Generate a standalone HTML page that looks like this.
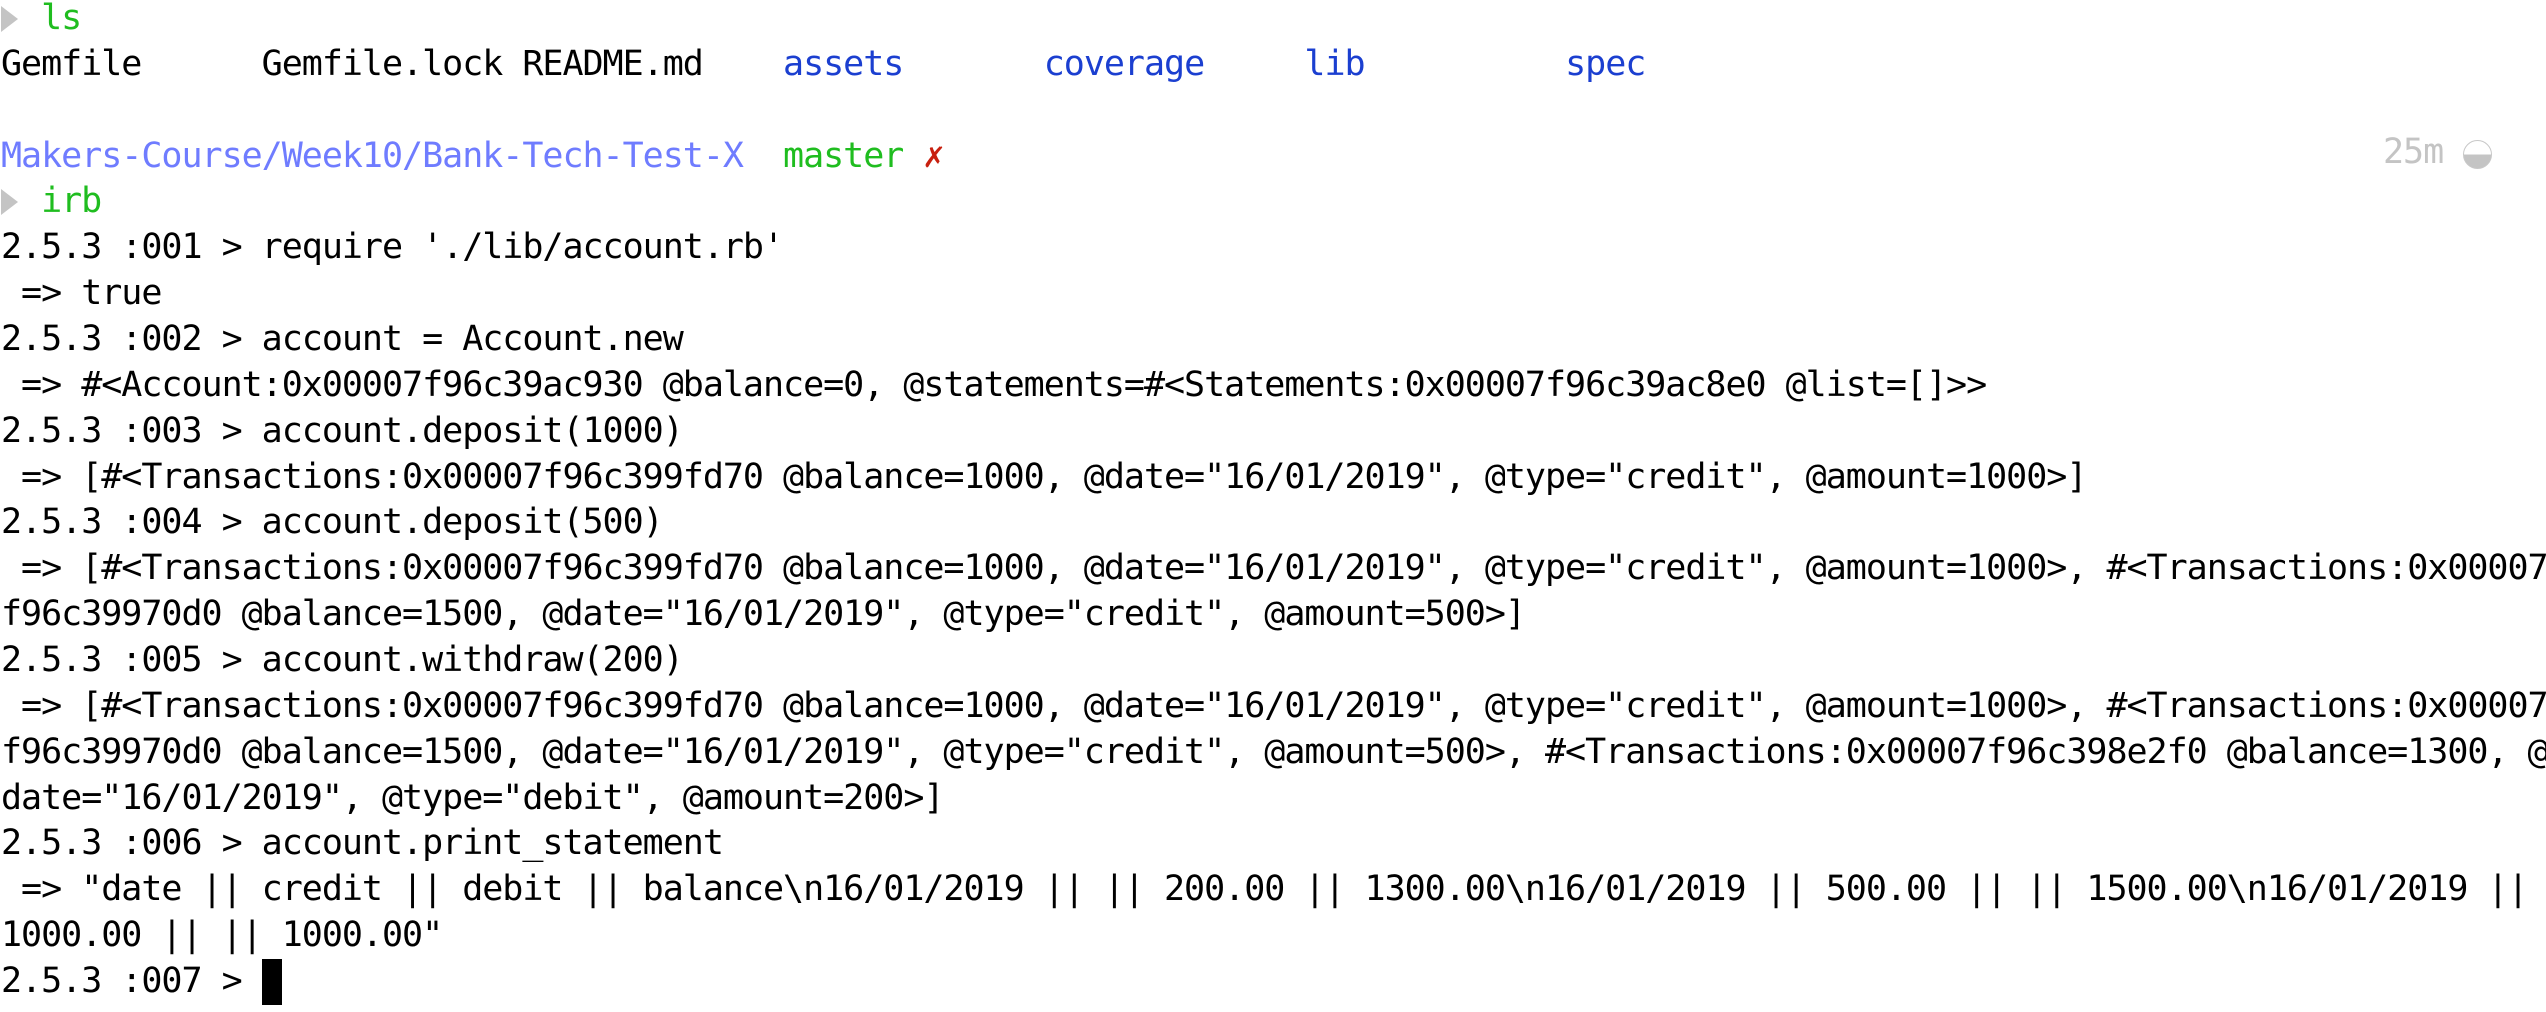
<!DOCTYPE html>
<html><head><meta charset="utf-8"><style>
html,body{margin:0;padding:0;background:#fff;width:2546px;height:1012px;overflow:hidden}
pre{margin:0;position:absolute;left:1px;top:-4px;font-family:"DejaVu Sans Mono","Liberation Mono",monospace;font-size:35px;letter-spacing:-1.02px;line-height:45.86px;color:#000;white-space:pre}
.g{color:#1fbd1f}.p{color:#6f7cff}.b{color:#1b3fd0}.r{color:#c8200f}.t{color:#c4c4c4}
.tri{display:inline-block;width:0;height:0;border-top:13px solid transparent;border-bottom:13px solid transparent;border-left:17px solid #c4c4c4;margin-right:3px;vertical-align:-3px}
.cur{display:inline-block;width:20px;height:46px;background:#000;vertical-align:top}
#rt{position:absolute;left:2383px;top:129px;font-family:"DejaVu Sans Mono",monospace;font-size:35px;letter-spacing:-1.02px;color:#c4c4c4;line-height:46px}
#circ{position:absolute;left:2463px;top:140px;width:27px;height:27px;border:1.5px solid #c8c8c8;border-radius:50%;overflow:hidden;background:linear-gradient(#fff 50%,#c4c4c4 50%)}
</style></head><body>
<pre><span class="tri"></span> <span class="g">ls</span>
Gemfile      Gemfile.lock README.md    <span class="b">assets</span>       <span class="b">coverage</span>     <span class="b">lib</span>          <span class="b">spec</span>

<span class="p">Makers-Course/Week10/Bank-Tech-Test-X</span>  <span class="g">master</span> <span class="r">✗</span>
<span class="tri"></span> <span class="g">irb</span>
2.5.3 :001 &gt; require './lib/account.rb'
 =&gt; true
2.5.3 :002 &gt; account = Account.new
 =&gt; #&lt;Account:0x00007f96c39ac930 @balance=0, @statements=#&lt;Statements:0x00007f96c39ac8e0 @list=[]&gt;&gt;
2.5.3 :003 &gt; account.deposit(1000)
 =&gt; [#&lt;Transactions:0x00007f96c399fd70 @balance=1000, @date="16/01/2019", @type="credit", @amount=1000&gt;]
2.5.3 :004 &gt; account.deposit(500)
 =&gt; [#&lt;Transactions:0x00007f96c399fd70 @balance=1000, @date="16/01/2019", @type="credit", @amount=1000&gt;, #&lt;Transactions:0x00007
f96c39970d0 @balance=1500, @date="16/01/2019", @type="credit", @amount=500&gt;]
2.5.3 :005 &gt; account.withdraw(200)
 =&gt; [#&lt;Transactions:0x00007f96c399fd70 @balance=1000, @date="16/01/2019", @type="credit", @amount=1000&gt;, #&lt;Transactions:0x00007
f96c39970d0 @balance=1500, @date="16/01/2019", @type="credit", @amount=500&gt;, #&lt;Transactions:0x00007f96c398e2f0 @balance=1300, @
date="16/01/2019", @type="debit", @amount=200&gt;]
2.5.3 :006 &gt; account.print_statement
 =&gt; "date || credit || debit || balance\n16/01/2019 || || 200.00 || 1300.00\n16/01/2019 || 500.00 || || 1500.00\n16/01/2019 ||
1000.00 || || 1000.00"
2.5.3 :007 &gt; <span class="cur"></span></pre>
<div id="rt">25m</div>
<div id="circ"></div>
</body></html>
